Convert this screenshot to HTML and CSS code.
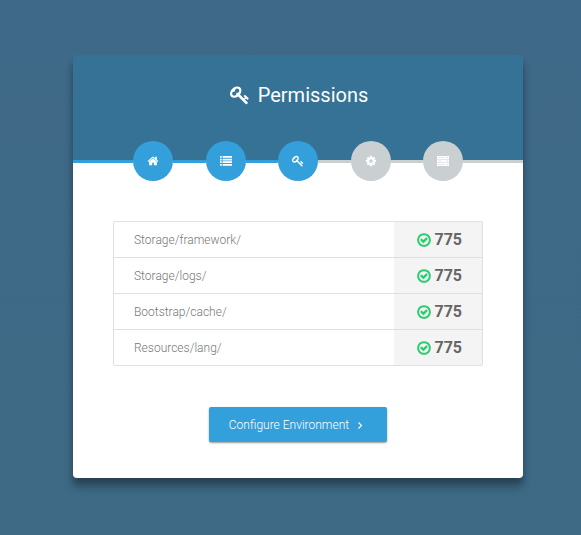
FILE: index.html
```html
<!DOCTYPE html>
<html lang="en">
<head>
<meta charset="utf-8">
<meta name="viewport" content="width=device-width, initial-scale=1">
<title>Permissions</title>
<link rel="stylesheet" href="styles.css">
</head>
<body>
<svg class="sprite" aria-hidden="true">
  <symbol id="key" viewBox="0 0 1792 1792"><path d="M832 512q0-80-56-136t-136-56-136 56-56 136q0 42 19 83-41-19-83-19-80 0-136 56t-56 136 56 136 136 56 136-56 56-136q0-42-19-83 41 19 83 19 80 0 136-56t56-136zm851 704q0 17-49 66t-66 49q-9 0-28.500-16t-36.500-33-38.500-40-24.500-26l-96 96 220 220q28 28 28 68 0 42-39 81t-81 39q-40 0-68-28l-671-671q-176 131-365 131-163 0-265.500-102.500t-102.500-265.500q0-160 95-313t248-248 313-95q163 0 265.500 102.500t102.500 265.500q0 189-131 365l355 355 96-96q-3-3-26-24.500t-40-38.500-33-36.500-16-28.500q0-17 49-66t66-49q13 0 23 10 6 6 46 44.500t82 79.500 86.500 86 73 78 28.500 41z"/></symbol>
  <symbol id="home" viewBox="0 0 1792 1792"><path d="M1472 992v480q0 26-19 45t-45 19h-384v-384h-256v384h-384q-26 0-45-19t-19-45v-480q0-1 .5-3t.5-3l575-474 575 474q1 2 1 6zm223-69l-62 74q-8 9-21 11h-3q-13 0-21-7l-692-577-692 577q-12 8-24 7-13-2-21-11l-62-74q-8-10-7-23.500t11-21.500l719-599q32-26 76-26t76 26l244 204v-195q0-14 9-23t23-9h192q14 0 23 9t9 23v408l219 182q10 8 11 21.500t-7 23.500z"/></symbol>
  <symbol id="list" viewBox="0 0 1792 1792"><path d="M0 149h256v260H0zM384 149h1408v260H384zM0 548h256v260H0zM384 548h1408v260H384zM0 946h256v260H0zM384 946h1408v260H384zM0 1344h256v260H0zM384 1344h1408v260H384z"/></symbol>
  <symbol id="gear" viewBox="0 0 1792 1792"><path d="M1152 896q0-106-75-181t-181-75-181 75-75 181 75 181 181 75 181-75 75-181zm512-109v222q0 12-8 23t-20 13l-185 28q-19 54-39 91 35 50 107 138 10 12 10 25t-9 23q-27 37-99 108t-94 71q-12 0-26-9l-138-108q-44 23-91 38-16 136-29 186-7 28-36 28h-222q-14 0-24.500-8.500t-11.500-21.500l-28-184q-49-16-90-37l-141 107q-10 9-25 9-14 0-25-11-126-114-165-168-7-10-7-23 0-12 8-23 15-21 51-66.500t54-70.500q-27-50-41-99l-183-27q-13-2-21-12.500t-8-23.500v-222q0-12 8-23t19-13l186-28q14-46 39-92-40-57-107-138-10-12-10-24 0-10 9-23 26-36 98.500-107.500t94.500-71.500q13 0 26 10l138 107q44-23 91-38 16-136 29-186 7-28 36-28h222q14 0 24.500 8.500t11.500 21.500l28 184q49 16 90 37l142-107q9-9 24-9 13 0 25 10 129 119 165 170 7 8 7 22 0 12-8 23-15 21-51 66.500t-54 70.500q26 50 41 98l183 28q13 2 21 12.500t8 23.500z"/></symbol>
  <symbol id="server" viewBox="0 0 1792 1792"><path fill-rule="evenodd" d="M0 149h1792v448H0zM128 343h1024v60H128zM1450 299h150v150h-150zM0 672h1792v448H0zM128 866h512v60H128zM1450 822h150v150h-150zM0 1195h1792v448H0zM128 1389h1024v60H128zM1450 1345h150v150h-150z"/></symbol>
  <symbol id="check" viewBox="0 0 1792 1792"><path d="M1299 813l-422 422q-19 19-45 19t-45-19l-294-294q-19-19-19-45t19-45l102-102q19-19 45-19t45 19l147 147 275-275q19-19 45-19t45 19l102 102q19 19 19 45t-19 45zm141 83q0-148-73-273t-198-198-273-73-273 73-198 198-73 273 73 273 198 198 273 73 273-73 198-198 73-273zm224 0q0 209-103 385.500t-279.500 279.500-385.500 103-385.500-103-279.500-279.500-103-385.500 103-385.500 279.500-279.500 385.500-103 385.500 103 279.500 279.500 103 385.500z"/></symbol>
  <symbol id="angle" viewBox="0 0 10 10"><path d="M1.500 2.500 4.500 5.500 1.500 8.500" fill="none" stroke="currentColor" stroke-width="1.100"/></symbol>
</svg>
<main class="card">
  <header class="header">
    <h1 class="title"><svg class="title-icon" aria-hidden="true"><use href="#key"/></svg>Permissions</h1>
  </header>
  <ol class="steps">
    <li class="line line-end done" role="presentation"></li>
    <li class="step done"><svg class="icon" aria-hidden="true"><use href="#home"/></svg></li>
    <li class="line done" role="presentation"></li>
    <li class="step done"><svg class="icon" aria-hidden="true"><use href="#list"/></svg></li>
    <li class="line done" role="presentation"></li>
    <li class="step done" aria-current="step"><svg class="icon" aria-hidden="true"><use href="#key"/></svg></li>
    <li class="line" role="presentation"></li>
    <li class="step"><svg class="icon" aria-hidden="true"><use href="#gear"/></svg></li>
    <li class="line" role="presentation"></li>
    <li class="step"><svg class="icon" aria-hidden="true"><use href="#server"/></svg></li>
    <li class="line line-end" role="presentation"></li>
  </ol>
  <div class="content">
    <table class="permissions">
      <tbody>
        <tr><th scope="row">Storage/framework/</th><td><span class="mode"><svg class="check" aria-hidden="true"><use href="#check"/></svg>775</span></td></tr>
        <tr><th scope="row">Storage/logs/</th><td><span class="mode"><svg class="check" aria-hidden="true"><use href="#check"/></svg>775</span></td></tr>
        <tr><th scope="row">Bootstrap/cache/</th><td><span class="mode"><svg class="check" aria-hidden="true"><use href="#check"/></svg>775</span></td></tr>
        <tr><th scope="row">Resources/lang/</th><td><span class="mode"><svg class="check" aria-hidden="true"><use href="#check"/></svg>775</span></td></tr>
      </tbody>
    </table>
    <a class="button" href="#environment">Configure Environment<svg class="angle" aria-hidden="true"><use href="#angle"/></svg></a>
  </div>
</main>
</body>
</html>
```
FILE: styles.css
```css
* {
  box-sizing: border-box;
}

body {
  margin: 0;
  min-height: 100vh;
  padding: 55px 58px 56px 73px;
  background: linear-gradient(#3f6988, #3e6a85);
  font-family: Roboto, "Liberation Sans", sans-serif;
}

svg {
  fill: currentColor;
  flex: none;
}

.sprite {
  display: none;
}

.card {
  max-width: 450px;
  margin: 0 auto;
  border-radius: 4px;
  background: linear-gradient(#357295 20px, #fff 20px);
  box-shadow: 0 10px 10px rgba(0, 0, 0, .19), 0 6px 6px rgba(0, 0, 0, .23);
}

.header {
  padding: 28px 30px 54px;
  border-radius: 4px 4px 0 0;
  background: #357295;
}

.title {
  display: flex;
  align-items: center;
  justify-content: center;
  gap: 8px;
  margin: 0;
  padding-left: 2px;
  color: #fff;
  font-size: 20px;
  font-weight: 400;
  line-height: 24px;
}

.title-icon {
  width: 20px;
  height: 20px;
}

.steps {
  display: flex;
  align-items: center;
  margin: -20px 0 0;
  padding: 0;
  list-style: none;
}

.step {
  display: flex;
  align-items: center;
  justify-content: center;
  flex: none;
  width: 40px;
  height: 40px;
  border-radius: 50%;
  background: #cacfd2;
  color: #fff;
}

.icon {
  width: 12px;
  height: 12px;
}

.line {
  flex: 1;
  height: 3px;
  background: #cacfd2;
}

.line-end {
  flex: 0 0 60px;
}

.done {
  background: #34a0db;
}

.content {
  display: flex;
  flex-direction: column;
  align-items: center;
  padding: 40px 40px 36px;
}

.permissions {
  width: 100%;
  margin-bottom: 41px;
  border: 1px solid #e0e0e0;
  border-bottom: 0;
  border-radius: 2px;
  border-spacing: 0;
}

.permissions th,
.permissions td {
  height: 36px;
  padding: 0 20px;
  border-bottom: 1px solid #e0e0e0;
}

.permissions th {
  color: #777;
  font-size: 12px;
  font-weight: 300;
  line-height: 16px;
  text-align: left;
}

.permissions td {
  width: 88px;
  background: #f4f4f4;
  color: #666;
  font-size: 16px;
  font-weight: 700;
  line-height: 20px;
}

.mode {
  display: flex;
  align-items: center;
  justify-content: flex-end;
  gap: 2px;
}

.check {
  width: 16px;
  height: 16px;
  color: #2ecc71;
}

.button {
  display: flex;
  align-items: center;
  gap: 8px;
  height: 35px;
  padding: 0 20px;
  border-radius: 2px;
  background: #34a0db;
  box-shadow: 0 1px 2px rgba(0, 0, 0, .4);
  color: #fff;
  font-size: 12px;
  font-weight: 300;
  text-decoration: none;
}

.angle {
  width: 10px;
  height: 10px;
}
```
